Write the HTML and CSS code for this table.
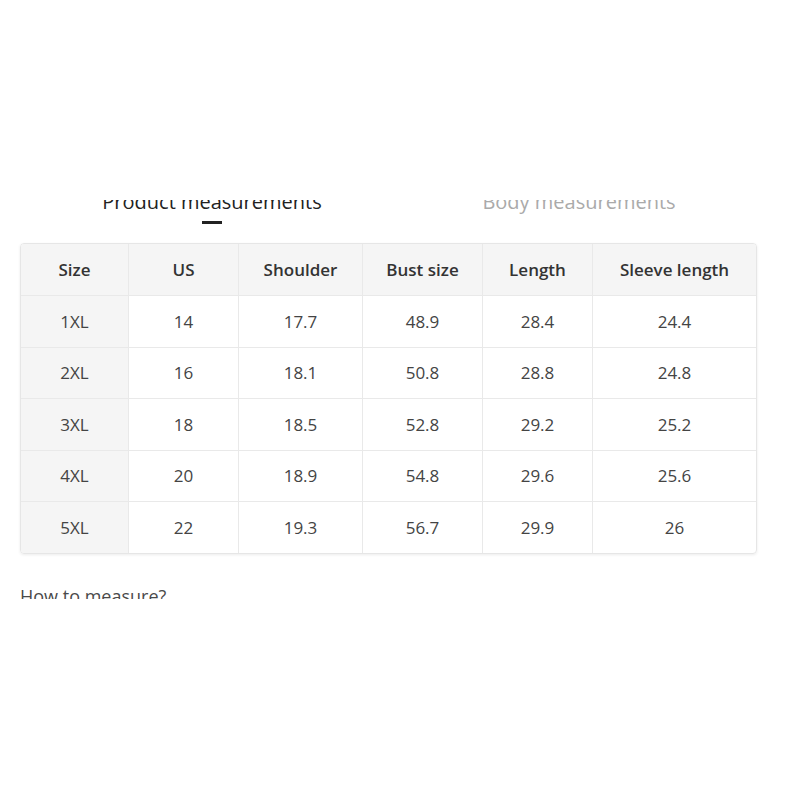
FILE: index.html
```html
<!DOCTYPE html>
<html>
<head>
<meta charset="utf-8">
<link rel="stylesheet" href="styles.css">
</head>
<body>
<div class="clip">
  <div class="tabs">
    <div class="tab active">Product measurements<span class="ind"></span></div>
    <div class="tab">Body measurements</div>
  </div>
  <div class="tbl">
    <div class="row head">
      <div class="c first">Size</div><div class="c">US</div><div class="c">Shoulder</div><div class="c">Bust size</div><div class="c">Length</div><div class="c last">Sleeve length</div>
    </div>
    <div class="row">
      <div class="c first">1XL</div><div class="c">14</div><div class="c">17.7</div><div class="c">48.9</div><div class="c">28.4</div><div class="c last">24.4</div>
    </div>
    <div class="row">
      <div class="c first">2XL</div><div class="c">16</div><div class="c">18.1</div><div class="c">50.8</div><div class="c">28.8</div><div class="c last">24.8</div>
    </div>
    <div class="row">
      <div class="c first">3XL</div><div class="c">18</div><div class="c">18.5</div><div class="c">52.8</div><div class="c">29.2</div><div class="c last">25.2</div>
    </div>
    <div class="row">
      <div class="c first">4XL</div><div class="c">20</div><div class="c">18.9</div><div class="c">54.8</div><div class="c">29.6</div><div class="c last">25.6</div>
    </div>
    <div class="row lastrow">
      <div class="c first">5XL</div><div class="c">22</div><div class="c">19.3</div><div class="c">56.7</div><div class="c">29.9</div><div class="c last">26</div>
    </div>
  </div>
  <div class="how">How to measure?</div>
</div>
</body>
</html>
```
FILE: styles.css
```css
html, body {
  margin: 0;
  padding: 0;
  background: #fff;
}
body {
  font-family: "Open Sans", "Noto Sans", sans-serif;
  color: #333;
  width: 800px;
  height: 800px;
  overflow: hidden;
}
.clip {
  margin-top: 200px;
  height: 399px;
  overflow: hidden;
}
.tabs {
  margin-top: -11px;
  margin-left: 20px;
  display: grid;
  grid-template-columns: 384px 350px;
}
.tab {
  position: relative;
  text-align: center;
  font-size: 20px;
  line-height: 26px;
  height: 26px;
  color: #aaa;
  white-space: nowrap;
}
.tab.active {
  color: #222;
}
.ind {
  position: absolute;
  left: 50%;
  top: 32px;
  width: 20px;
  height: 3px;
  margin-left: -10px;
  background: #222;
}
.tbl {
  margin: 28px 0 0 20px;
  width: 737px;
  box-sizing: border-box;
  border: 1px solid #e6e6e6;
  border-radius: 4px;
  box-shadow: 0 1px 3px rgba(0,0,0,0.08);
  overflow: hidden;
}
.row {
  display: grid;
  grid-template-columns: 108px 110px 124px 120px 110px 1fr;
  height: 51.5px;
  border-bottom: 1px solid #e9e9e9;
  box-sizing: border-box;
}
.row.head {
  background: #f5f5f5;
  height: 52px;
}
.row.lastrow {
  border-bottom: none;
  height: 51px;
}
.c {
  display: flex;
  align-items: center;
  justify-content: center;
  font-size: 17px;
  font-weight: 500;
  color: #444;
  border-right: 1px solid #e9e9e9;
}
.c.last {
  border-right: none;
}
.c.first {
  background: #f5f5f5;
}
.head .c {
  font-weight: 600;
  color: #333;
}
.how {
  margin: 30px 0 0 20px;
  font-size: 18px;
  line-height: 24px;
  color: #4a4a4a;
}
```
